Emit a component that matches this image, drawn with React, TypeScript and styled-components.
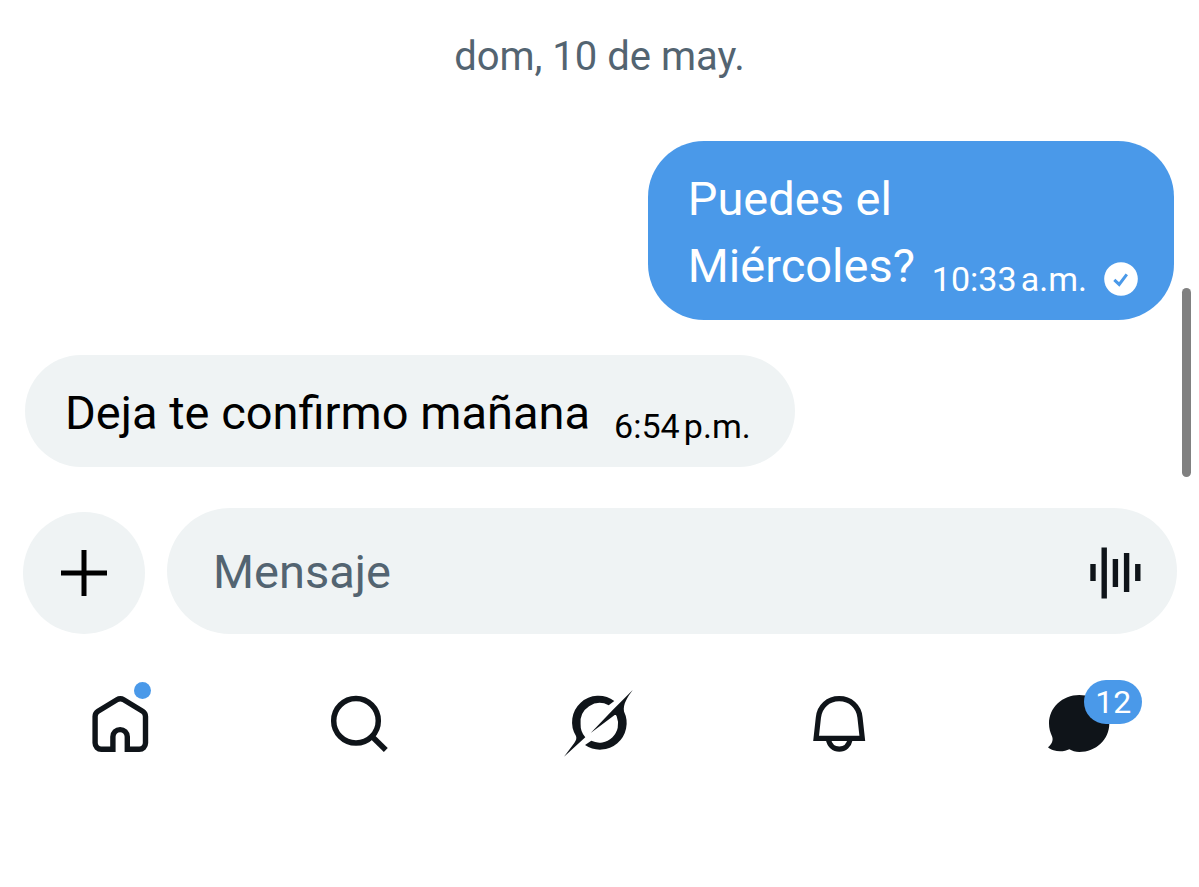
import React, { ReactElement, useState } from 'react';
import styled, { createGlobalStyle } from 'styled-components';

const GlobalStyle = createGlobalStyle`
  body {
    margin: 0;
    background: #ffffff;
    color: #0f1419;
    font-family: Roboto, 'Liberation Sans', sans-serif;
  }

  * {
    box-sizing: border-box;
  }
`;

const Screen = styled.div`
  display: flex;
  flex-direction: column;
  min-height: 100vh;
`;

const Thread = styled.main`
  position: relative;
  display: flex;
  flex-direction: column;
  gap: 35px;
  padding: 32px 25px 0;
`;

const DateLabel = styled.time`
  align-self: center;
  margin-bottom: 25px;
  font-size: 40px;
  line-height: 49px;
  color: #536471;
`;

const Bubble = styled.div<{ $own?: boolean }>`
  display: flex;
  align-items: flex-end;
  align-self: ${({ $own }) => ($own ? 'flex-end' : 'flex-start')};
  gap: ${({ $own }) => ($own ? '17px' : '24px')};
  padding: 24px ${({ $own }) => ($own ? '36px' : '44px')} 21px 40px;
  border-radius: 56px;
  background: ${({ $own }) => ($own ? '#4a99e9' : '#eff3f4')};
  color: ${({ $own }) => ($own ? '#ffffff' : '#000000')};
`;

const BubbleText = styled.p`
  margin: 0;
  font-size: 47px;
  line-height: 67px;
  white-space: pre-line;
`;

const Meta = styled.div`
  display: flex;
  align-items: center;
  gap: 17px;
  font-size: 34px;
  line-height: 40px;
`;

const ScrollThumb = styled.div`
  position: absolute;
  right: 8px;
  top: 288px;
  width: 9px;
  height: 189px;
  border-radius: 5px;
  background: #808080;
`;

const Composer = styled.form`
  display: flex;
  align-items: flex-end;
  gap: 22px;
  margin-top: 41px;
  padding: 0 22px 0 23px;
`;

const AddButton = styled.button`
  display: flex;
  align-items: center;
  justify-content: center;
  flex: none;
  width: 122px;
  height: 122px;
  padding: 0;
  border: none;
  border-radius: 50%;
  background: #eff3f4;
`;

const Field = styled.div`
  display: flex;
  align-items: center;
  flex: 1;
  min-width: 0;
  height: 126px;
  padding: 0 35px 0 46px;
  border-radius: 63px;
  background: #eff3f4;
`;

const Input = styled.input`
  flex: 1;
  min-width: 0;
  padding: 0;
  border: none;
  outline: none;
  background: transparent;
  color: #0f1419;
  font-family: inherit;
  font-size: 47px;
  line-height: 67px;

  &::placeholder {
    color: #536471;
    opacity: 1;
  }
`;

const VoiceButton = styled.button`
  display: flex;
  padding: 4px 0 0;
  border: none;
  background: transparent;
`;

const TabBar = styled.nav`
  display: grid;
  grid-template-columns: repeat(5, 1fr);
  justify-items: center;
  margin-top: 54px;
  padding-left: 1px;
`;

const Tab = styled.a`
  position: relative;
  display: flex;
  color: #0f1419;
  text-decoration: none;
`;

const Dot = styled.span`
  position: absolute;
  top: -6px;
  left: 49px;
  width: 17px;
  height: 17px;
  border-radius: 50%;
  background: #4a99e9;
`;

const Count = styled.span`
  position: absolute;
  top: -8px;
  left: 41px;
  min-width: 58px;
  height: 44px;
  border-radius: 22px;
  background: #4a99e9;
  color: #ffffff;
  font-size: 32px;
  line-height: 44px;
  text-align: center;
`;

const Icon = ({ children }: { children: React.ReactNode }): ReactElement => (
  <svg width="72" height="72" viewBox="0 0 72 72" fill="none" overflow="visible" aria-hidden="true">
    {children}
  </svg>
);

const HomeIcon = (): ReactElement => (
  <Icon>
    <path
      d="M27.9 61.3H16.3a6.2 6.2 0 0 1-6.2-6.2V28.5c0-2.2 1-4 2.9-5.2L31.9 11.8a6.5 6.5 0 0 1 6.8 0L57.6 23.3c1.9 1.2 2.9 3 2.9 5.2v26.6a6.2 6.2 0 0 1-6.2 6.2H42.3V48.8a7.2 7.2 0 0 0-14.4 0z"
      stroke="currentColor"
      strokeWidth="5.4"
    />
  </Icon>
);

const SearchIcon = (): ReactElement => (
  <Icon>
    <circle cx="32" cy="32.7" r="22.3" stroke="currentColor" strokeWidth="5.5" />
    <path d="M48 48.5L61.8 62" stroke="currentColor" strokeWidth="5.6" />
  </Icon>
);

const GrokIcon = (): ReactElement => (
  <Icon>
    <path
      d="M50.3 13A26.4 26.4 0 0 0 12 48C12.8 50.5 12.2 52.3 10.3 55L0 68.7 21.3 49.3A19 19 0 0 1 16.6 36 19.2 19.2 0 0 1 44.7 17.3z"
      fill="currentColor"
    />
    <path
      d="M68.7 2C63.5 9.2 58.8 16 60 23.5A26.6 26.6 0 0 1 21 57l6.3-4.2A18.8 18.8 0 0 0 52.8 28.8C52.4 27.2 51.4 26.6 50 27.6L26.7 45 48.7 22z"
      fill="currentColor"
    />
  </Icon>
);

const BellIcon = (): ReactElement => (
  <Icon>
    <path
      d="M12.1 50.3l2.3-20.8C15.5 18.5 24 10.7 35.2 10.7S55 18.5 56 29.5l2.3 20.8z"
      stroke="currentColor"
      strokeWidth="5.2"
    />
    <path d="M24.3 51c1.2 6.5 5.7 10.2 11 10.2S45 57.5 46.3 51" stroke="currentColor" strokeWidth="5.2" />
  </Icon>
);

const ChatIcon = (): ReactElement => (
  <Icon>
    <path
      d="M36.3 7C53 7 66.3 19.5 66.3 35.5S53 64 36.3 64C32.5 64 29 62.8 26.3 61.2 22.5 63.2 16 64.2 10.5 62.2 8.5 61.5 6.3 60.5 5 59.2 8.5 57 10.5 52.5 9.2 48.8 7.3 44.5 6 40.5 6 35.5 6 19.5 19.5 7 36.3 7z"
      fill="currentColor"
    />
  </Icon>
);

const MessageForm = (): ReactElement => {
  const [value, setValue] = useState('');

  const handleSubmit = (e: React.FormEvent<HTMLFormElement>): void => {
    e.preventDefault();
    setValue('');
  };

  return (
    <Composer onSubmit={handleSubmit}>
      <AddButton type="button" aria-label="Añadir">
        <svg width="46" height="46" viewBox="0 0 46 46" aria-hidden="true">
          <path d="M23 0v46M0 23h46" stroke="#000000" strokeWidth="5" />
        </svg>
      </AddButton>
      <Field>
        <Input
          aria-label="Mensaje"
          placeholder="Mensaje"
          value={value}
          onChange={(e) => setValue(e.target.value)}
        />
        <VoiceButton type="button" aria-label="Mensaje de voz">
          <svg width="52" height="52" viewBox="0 0 52 52" aria-hidden="true">
            <path
              d="M3 17v17M14.2 0.5v51M25.4 12v28M36.6 6v39M47.8 17v17"
              stroke="#0f1419"
              strokeWidth="5.4"
            />
          </svg>
        </VoiceButton>
      </Field>
    </Composer>
  );
};

const App = (): ReactElement => {
  return (
    <>
      <GlobalStyle />
      <Screen>
        <Thread>
          <DateLabel>dom, 10 de may.</DateLabel>
          <Bubble $own>
            <BubbleText>{'Puedes el\nMiércoles?'}</BubbleText>
            <Meta>
              <time>10:33{'\u202f'}a.m.</time>
              <svg width="34" height="34" viewBox="0 0 34 34" role="img" aria-label="Enviado">
                <circle cx="17" cy="17" r="16.8" fill="#ffffff" />
                <path d="M10.3 17.8l4.9 4.6 7.6-10" fill="none" stroke="#4a99e9" strokeWidth="3" />
              </svg>
            </Meta>
          </Bubble>
          <Bubble>
            <BubbleText>Deja te confirmo mañana</BubbleText>
            <Meta>
              <time>6:54{'\u202f'}p.m.</time>
            </Meta>
          </Bubble>
          <ScrollThumb />
        </Thread>
        <MessageForm />
        <TabBar>
          <Tab href="#home" aria-label="Inicio">
            <HomeIcon />
            <Dot />
          </Tab>
          <Tab href="#search" aria-label="Buscar">
            <SearchIcon />
          </Tab>
          <Tab href="#grok" aria-label="Grok">
            <GrokIcon />
          </Tab>
          <Tab href="#notifications" aria-label="Notificaciones">
            <BellIcon />
          </Tab>
          <Tab href="#messages" aria-label="Mensajes">
            <ChatIcon />
            <Count>12</Count>
          </Tab>
        </TabBar>
      </Screen>
    </>
  );
};

export default React.memo(App);
